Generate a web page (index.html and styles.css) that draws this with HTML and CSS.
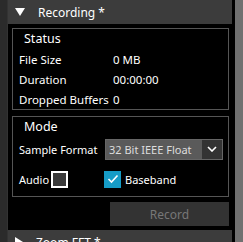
FILE: index.html
```html
<!DOCTYPE html>
<html lang="en">
<head>
    <meta charset="UTF-8">
    <meta name="viewport" content="width=device-width, initial-scale=1.0">
    <link rel="stylesheet" href="styles.css">
</head>
<body>
    <div class="strip"></div>
    <div class="dock">
        <div class="section-head">
            <span class="arrow open"></span>
            <span class="head-title">Recording *</span>
        </div>
        <div class="section-body">
            <div class="group status">
                <div class="group-title">Status</div>
                <div class="row"><span class="label">File Size</span><span class="value">0 MB</span></div>
                <div class="row"><span class="label">Duration</span><span class="value">00:00:00</span></div>
                <div class="row"><span class="label">Dropped Buffers</span><span class="value">0</span></div>
            </div>
            <div class="group mode">
                <div class="group-title">Mode</div>
                <div class="row format-row">
                    <span class="label">Sample Format</span>
                    <div class="combo">
                        <span class="combo-text">32 Bit IEEE Float</span>
                        <span class="combo-btn">
                            <svg width="10" height="6" viewBox="0 0 10 6"><path d="M1 1 L5 5 L9 1" fill="none" stroke="#fff" stroke-width="1.6"/></svg>
                        </span>
                    </div>
                </div>
                <div class="row check-row">
                    <span class="label audio-label">Audio</span>
                    <span class="check"></span>
                    <span class="check checked">
                        <svg width="12" height="10" viewBox="0 0 12 10"><path d="M1.5 5 L4.5 8 L10.5 1.5" fill="none" stroke="#fff" stroke-width="1.6"/></svg>
                    </span>
                    <span class="label">Baseband</span>
                </div>
            </div>
            <div class="actions">
                <button class="record">Record</button>
            </div>
        </div>
        <div class="section-head">
            <span class="arrow closed"></span>
            <span class="head-title">Zoom FFT *</span>
        </div>
    </div>
    <div class="gutter"></div>
    <div class="scrollbar"></div>
</body>
</html>
```

FILE: styles.css
```css
body {
    margin: 0;
    width: 243px;
    height: 242px;
    overflow: hidden;
    display: flex;
    background-color: #000;
    color: #fff;
    font-family: "Noto Sans", sans-serif;
    font-size: 11.5px;
}
.strip {
    width: 7px;
    flex-shrink: 0;
    background-color: #2b2b2b;
    border-right: 1px solid #333;
}
.dock {
    width: 224px;
    flex-shrink: 0;
    background-color: #000;
}
.gutter {
    width: 3px;
    flex-shrink: 0;
    background-color: #000;
}
.scrollbar {
    width: 8px;
    flex-shrink: 0;
    background-color: #707070;
}
.section-head {
    height: 24px;
    background-color: #3c3c3c;
    display: flex;
    align-items: center;
}
.head-title {
    font-size: 12px;
    margin-left: 13px;
    white-space: nowrap;
}
.arrow {
    width: 0;
    height: 0;
    margin-left: 7px;
}
.arrow.open {
    border-left: 5px solid transparent;
    border-right: 5px solid transparent;
    border-top: 8px solid #fff;
}
.arrow.closed {
    border-top: 5px solid transparent;
    border-bottom: 5px solid transparent;
    border-left: 8px solid #fff;
}
.section-body {
    padding: 4px 3px 4px 4px;
}
.group {
    border: 1px solid #555;
    padding: 0 6px 0 6px;
}
.status {
    height: 80px;
}
.mode {
    margin-top: 6px;
    height: 79px;
    font-size: 11px;
}
.group-title {
    font-size: 12.5px;
    margin-left: 5px;
    height: 20px;
    line-height: 20px;
}
.row {
    display: flex;
    align-items: center;
    height: 20px;
    white-space: nowrap;
}
.label {
    flex-shrink: 0;
}
.status .row .label {
    width: 94px;
}
.format-row {
    height: 22px;
    margin-top: 1px;
}
.format-row .label {
    width: 86px;
}
.combo {
    display: flex;
    flex-shrink: 0;
    width: 116px;
    height: 19px;
    border: 1px solid #666;
    background-color: #5a5a5a;
}
.combo-text {
    flex: 1;
    line-height: 19px;
    padding-left: 3px;
    color: #ddd;
    overflow: hidden;
}
.combo-btn {
    width: 20px;
    background-color: #333;
    display: flex;
    align-items: center;
    justify-content: center;
}
.check-row {
    margin-top: 10px;
    height: 18px;
}
.audio-label {
    width: 32px;
}
.check {
    width: 13px;
    height: 13px;
    flex-shrink: 0;
    border: 2px solid #fff;
    background-color: #3a3a3a;
}
.check.checked {
    margin-left: 36px;
    margin-right: 4px;
    border: 2px solid #169cc6;
    background-color: #169cc6;
    display: flex;
    align-items: center;
    justify-content: center;
}
.actions {
    display: flex;
    justify-content: flex-end;
    margin-top: 5px;
}
.record {
    width: 119px;
    height: 24px;
    border: none;
    background-color: #333;
    color: #777;
    font-family: "Noto Sans", sans-serif;
    font-size: 12px;
}
```
